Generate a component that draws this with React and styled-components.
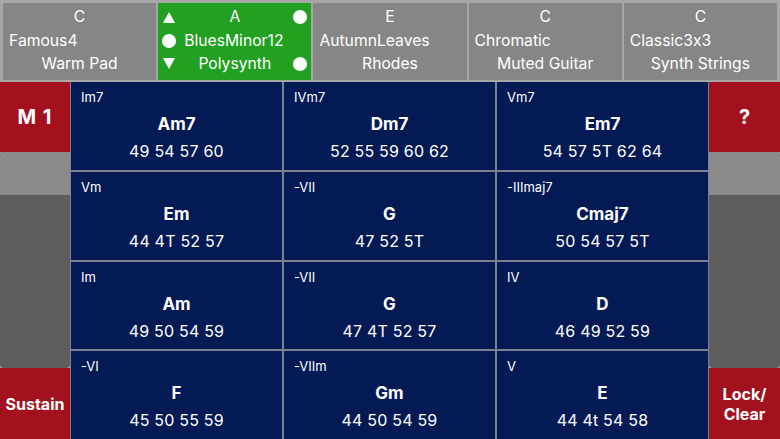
import React from "react";
import styled, { createGlobalStyle } from "styled-components";

const Global = createGlobalStyle`
  html, body { margin: 0; padding: 0; }
  body {
    width: 780px; height: 439px; overflow: hidden;
    background: #a7a7a7;
    font-family: Inter, "Noto Sans", "Liberation Sans", sans-serif;
    font-feature-settings: "calt" 0;
    color: #fff;
  }
  * { box-sizing: border-box; }
`;

const Page = styled.div`
  width: 780px; height: 439px;
  display: flex; flex-direction: column;
`;

const TopBar = styled.div`
  height: 82px;
  padding: 3px 3px 2px;
  display: grid;
  grid-template-columns: repeat(5, 1fr);
  gap: 2px;
  background: #a7a7a7;
`;

const Tile = styled.div`
  background: ${p => (p.$active ? "#22a021" : "#868686")};
  display: grid;
  grid-template-columns: ${p => (p.$active ? "22px 1fr 22px" : "6px 1fr 6px")};
  grid-template-rows: 24px 23px 23px;
  padding-top: 2px;
  align-items: center;
  font-size: 15.7px;
`;

const Line = styled.div`
  grid-column: 2;
  text-align: ${p => p.$align || "center"};
  white-space: nowrap;
  padding-left: ${p => p.$indent || 0}px;
  line-height: 1;
`;

const Mark = styled.div`
  grid-column: ${p => p.$col};
  display: flex; justify-content: center; align-items: center;
`;

const Dot = styled.span`
  width: 14px; height: 14px; border-radius: 50%; background: #fff;
  display: block;
`;

const Tri = styled.span`
  width: 0; height: 0; display: block;
  border-left: 6px solid transparent;
  border-right: 6px solid transparent;
  ${p => (p.$up ? "border-bottom: 11px solid #fff;" : "border-top: 11px solid #fff;")}
`;

const Main = styled.div`
  flex: 1;
  display: grid;
  grid-template-columns: 70px 1fr 71px;
  gap: 1px;
  background: #7c8191;
`;

const Side = styled.div`
  display: flex; flex-direction: column;
  background: #a7a7a7;
`;

const RedButton = styled.div`
  height: ${p => p.$h}px;
  background: #a2111d;
  display: flex; align-items: center; justify-content: center;
  text-align: center;
  font-weight: 700;
  font-size: ${p => p.$size}px;
  line-height: 20px;
  letter-spacing: ${p => p.$ls || 0}px;
`;

const Slider = styled.div`
  flex: 1;
  display: flex; flex-direction: column;
  background: #5e5e5e;
  border-radius: 4px;
  overflow: hidden;
`;

const Thumb = styled.div`
  height: 43px;
  background: #8b8b8b;
`;

const Grid = styled.div`
  display: grid;
  grid-template-columns: repeat(3, 1fr);
  grid-template-rows: repeat(4, 1fr);
  gap: 2px;
  background: #7c8191;
`;

const Cell = styled.div`
  background: #041a54;
  position: relative;
  display: flex; flex-direction: column; align-items: center;
  padding-top: 31px;
`;

const Degree = styled.div`
  position: absolute; left: 10px; top: 7px;
  font-size: 13px;
  line-height: 16px;
`;

const Chord = styled.div`
  font-weight: 700;
  font-size: 17px;
  line-height: 22px;
`;

const Notes = styled.div`
  margin-top: 6px;
  font-size: 16px;
  line-height: 20px;
  letter-spacing: 0.2px;
`;

const tiles = [
  { key: "C", a: "Famous4", b: "Warm Pad" },
  { key: "A", a: "BluesMinor12", b: "Polysynth", active: true },
  { key: "E", a: "AutumnLeaves", b: "Rhodes" },
  { key: "C", a: "Chromatic", b: "Muted Guitar" },
  { key: "C", a: "Classic3x3", b: "Synth Strings" },
];

const cells = [
  ["Im7", "Am7", "49 54 57 60"],
  ["IVm7", "Dm7", "52 55 59 60 62"],
  ["Vm7", "Em7", "54 57 5T 62 64"],
  ["Vm", "Em", "44 4T 52 57"],
  ["-VII", "G", "47 52 5T"],
  ["-IIImaj7", "Cmaj7", "50 54 57 5T"],
  ["Im", "Am", "49 50 54 59"],
  ["-VII", "G", "47 4T 52 57"],
  ["IV", "D", "46 49 52 59"],
  ["-VI", "F", "45 50 55 59"],
  ["-VIIm", "Gm", "44 50 54 59"],
  ["V", "E", "44 4t 54 58"],
];

export default function App() {
  return (
    <Page>
      <Global />
      <TopBar>
        {tiles.map((t, i) => (
          <Tile key={i} $active={t.active}>
            {t.active && <Mark $col={1}><Tri $up /></Mark>}
            <Line>{t.key}</Line>
            {t.active && <Mark $col={3}><Dot /></Mark>}
            {t.active && <Mark $col={1}><Dot /></Mark>}
            <Line $align="left" $indent={t.active ? 4 : 0}>{t.a}</Line>
            {t.active && <Mark $col={3} />}
            {t.active && <Mark $col={1}><Tri /></Mark>}
            <Line>{t.b}</Line>
            {t.active && <Mark $col={3}><Dot /></Mark>}
          </Tile>
        ))}
      </TopBar>
      <Main>
        <Side>
          <RedButton $h={70} $size={20} $ls={1}>M 1</RedButton>
          <Slider><Thumb /></Slider>
          <RedButton $h={71} $size={16}>Sustain</RedButton>
        </Side>
        <Grid>
          {cells.map(([d, c, n], i) => (
            <Cell key={i}>
              <Degree>{d}</Degree>
              <Chord>{c}</Chord>
              <Notes>{n}</Notes>
            </Cell>
          ))}
        </Grid>
        <Side>
          <RedButton $h={70} $size={20}>?</RedButton>
          <Slider><Thumb /></Slider>
          <RedButton $h={71} $size={16}>Lock/<br />Clear</RedButton>
        </Side>
      </Main>
    </Page>
  );
}
